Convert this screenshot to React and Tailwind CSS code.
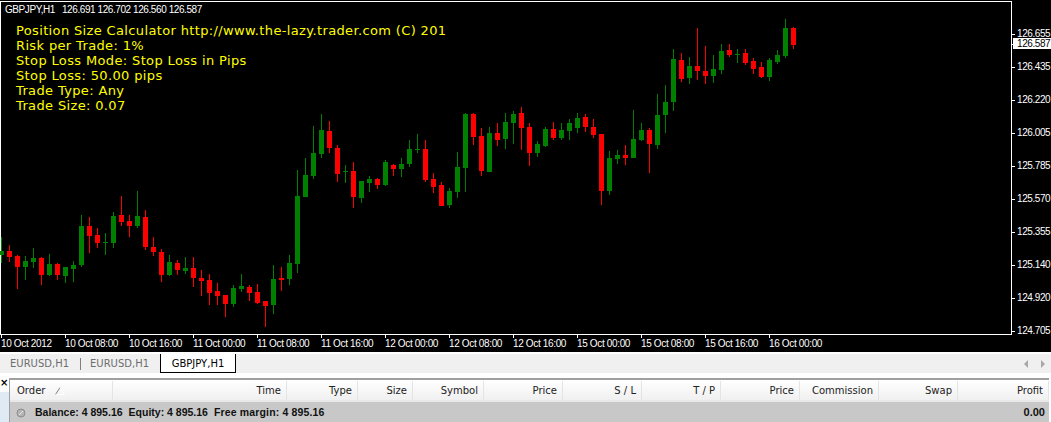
import React from "react";

const ui = "font-['DejaVu_Sans',sans-serif]";
const narrow = "font-['Liberation_Sans',sans-serif]";

// x, up, wickTop, wickBottom, bodyTop, bodyBottom
const z2 = [
  [4, 1, 292, 368, 333, 345], [28, 0, 315, 365, 333, 351], [52, 0, 345, 447, 348, 381], [76, 1, 348, 420, 363, 381],
  [100, 1, 324, 384, 354, 366], [124, 0, 351, 435, 354, 405], [148, 1, 342, 408, 372, 405], [172, 0, 369, 420, 372, 405],
  [196, 1, 381, 429, 381, 408], [220, 1, 363, 426, 375, 387], [244, 1, 225, 381, 258, 375], [268, 0, 231, 339, 258, 288],
  [292, 0, 264, 324, 285, 309], [316, 1, 279, 345, 306, 309], [340, 1, 216, 324, 228, 309], [364, 0, 168, 258, 225, 246],
  [388, 0, 225, 291, 243, 258], [412, 1, 153, 264, 228, 258], [436, 0, 210, 330, 231, 321], [460, 0, 291, 348, 321, 336],
  [484, 0, 327, 426, 336, 405], [508, 1, 345, 408, 366, 405], [532, 0, 360, 405, 369, 390], [556, 1, 351, 402, 384, 393],
  [580, 0, 351, 441, 384, 414], [604, 0, 390, 468, 414, 423], [628, 0, 402, 495, 420, 459], [652, 0, 429, 495, 453, 468],
  [676, 0, 465, 531, 465, 492], [700, 1, 435, 501, 444, 492], [724, 1, 402, 456, 438, 447], [748, 0, 435, 483, 441, 459],
  [772, 0, 432, 492, 456, 489], [796, 0, 483, 561, 483, 498], [820, 1, 375, 522, 417, 495], [844, 0, 381, 453, 414, 420],
  [868, 1, 345, 435, 369, 417], [892, 1, 90, 399, 168, 372], [916, 1, 54, 171, 105, 171], [940, 1, -42, 117, 39, 108],
  [964, 1, -78, 54, -30, 42], [988, 0, -57, 39, -27, 24], [1012, 0, 15, 126, 24, 102], [1036, 1, 75, 129, 93, 96],
];
const z3 = [
  [10, 0, 216, 354, 243, 321], [34, 1, 273, 339, 273, 324], [58, 1, 258, 306, 267, 279], [82, 0, 264, 297, 267, 285],
  [106, 1, 210, 288, 216, 285], [130, 0, 222, 258, 225, 237], [154, 1, 204, 261, 222, 237], [178, 1, 150, 231, 177, 222],
  [202, 1, 132, 189, 177, 180], [226, 0, 150, 276, 177, 270], [250, 0, 249, 309, 267, 291], [274, 0, 276, 348, 285, 348],
  [298, 1, 294, 354, 303, 345], [322, 1, 186, 324, 231, 306], [346, 1, 69, 306, 72, 234], [370, 0, 69, 165, 72, 141],
  [394, 0, 114, 258, 138, 243], [418, 1, 111, 246, 129, 246], [442, 0, 99, 168, 129, 150], [466, 1, 69, 177, 96, 147],
  [490, 1, 63, 162, 72, 99], [514, 0, 51, 180, 69, 114], [538, 0, 99, 228, 111, 189], [562, 1, 153, 201, 162, 189],
  [586, 1, 111, 171, 117, 168], [610, 0, 96, 150, 117, 144], [634, 1, 99, 150, 120, 144], [658, 1, 87, 150, 99, 123],
  [682, 1, 69, 129, 84, 114], [706, 0, 72, 126, 81, 111], [730, 0, 87, 144, 111, 135], [754, 0, 132, 345, 132, 303],
  [778, 1, 183, 315, 204, 303], [802, 1, 180, 222, 195, 207], [826, 0, 165, 225, 195, 204], [850, 1, 60, 204, 147, 204],
  [874, 1, 99, 153, 120, 150], [898, 0, 114, 249, 120, 162],
];
const z4 = [
  [51, 1, 252, 417, 315, 405], [75, 1, 225, 369, 276, 315], [99, 1, 117, 303, 147, 276], [123, 0, 129, 216, 150, 207],
  [147, 1, 141, 222, 168, 204], [171, 0, 54, 210, 168, 183], [195, 0, 108, 222, 183, 198], [219, 1, 135, 219, 177, 198],
  [243, 1, 102, 192, 123, 180], [267, 0, 102, 141, 120, 135], [291, 1, 117, 159, 132, 135], [315, 0, 117, 165, 129, 159],
  [339, 0, 144, 192, 153, 177], [363, 0, 156, 204, 171, 201], [387, 1, 144, 213, 150, 201], [411, 1, 120, 162, 135, 156],
  [435, 1, 27, 144, 54, 138], [459, 0, 51, 117, 54, 105],
];

const toCandle = (ox, oy) => ([x, up, wt, wb, bt, bb]) => ({
  x: Math.round(ox + x / 3),
  up,
  wt: Math.round(oy + wt / 3),
  wb: Math.round(oy + wb / 3),
  bt: Math.round(oy + bt / 3),
  bb: Math.round(oy + bb / 3),
});

const candles = [...z2.map(toCandle(0, 140)), ...z3.map(toCandle(350, 90)), ...z4.map(toCandle(640, 10))];

const prices = [
  ["126.655", 34], ["126.435", 67], ["126.220", 100], ["126.005", 133], ["125.785", 166], ["125.570", 199],
  ["125.355", 232], ["125.140", 265], ["124.920", 298], ["124.705", 331],
];

const times = [
  ["10 Oct 2012", 1], ["10 Oct 08:00", 65], ["10 Oct 16:00", 129], ["11 Oct 00:00", 193], ["11 Oct 08:00", 257],
  ["11 Oct 16:00", 321], ["12 Oct 00:00", 385], ["12 Oct 08:00", 449], ["12 Oct 16:00", 513], ["15 Oct 00:00", 577],
  ["15 Oct 08:00", 641], ["15 Oct 16:00", 705], ["16 Oct 00:00", 769],
];

const infoLines = [
  "Position Size Calculator http://www.the-lazy.trader.com (C) 201",
  "Risk per Trade: 1%",
  "Stop Loss Mode: Stop Loss in Pips",
  "Stop Loss: 50.00 pips",
  "Trade Type: Any",
  "Trade Size: 0.07",
];

const columns = [
  { label: "Time", w: "w-[174px]" },
  { label: "Type", w: "w-[71px]" },
  { label: "Size", w: "w-[55px]" },
  { label: "Symbol", w: "w-[71px]" },
  { label: "Price", w: "w-[79px]" },
  { label: "S / L", w: "w-[79px]" },
  { label: "T / P", w: "w-[79px]" },
  { label: "Price", w: "w-[79px]" },
  { label: "Commission", w: "w-[79px]" },
  { label: "Swap", w: "w-[79px]" },
  { label: "Profit", w: "flex-1" },
];

function Chart() {
  return (
    <svg width="1051" height="352" className="block" shapeRendering="crispEdges">
      <rect x="0" y="1" width="1012" height="1" fill="#fff" />
      <rect x="0" y="1" width="1" height="334" fill="#fff" />
      <rect x="1011" y="1" width="1" height="334" fill="#fff" />
      <rect x="0" y="334" width="1012" height="1" fill="#fff" />
      {candles.map((c) => (
        <g key={c.x} fill={c.up ? "#008000" : "#ff0000"}>
          <rect x={c.x} y={c.wt} width="1" height={c.wb - c.wt} />
          <rect x={c.x - 2} y={c.bt} width="5" height={Math.max(c.bb - c.bt, 1)} />
        </g>
      ))}
      {prices.map(([p, y]) => (
        <g key={p}>
          <rect x="1012" y={y} width="3" height="1" fill="#fff" />
          <text x="1017" y={y + 3} fill="#fff" fontSize="10" fontFamily="Liberation Sans" letterSpacing="-0.42">
            {p}
          </text>
        </g>
      ))}
      <rect x="1012" y="44" width="3" height="1" fill="#fff" />
      <rect x="1013" y="38" width="38" height="11" fill="#fff" />
      <text x="1017" y="47" fill="#000" fontSize="10" fontFamily="Liberation Sans" letterSpacing="-0.42">126.587</text>
      {times.map(([t, x]) => (
        <g key={t}>
          <rect x={x} y="335" width="1" height="3" fill="#fff" />
          <text x={x} y="347" fill="#fff" fontSize="10" fontFamily="Liberation Sans" letterSpacing="-0.35">
            {t}
          </text>
        </g>
      ))}
    </svg>
  );
}

export default function App() {
  return (
    <div className={`h-[422px] w-[1051px] overflow-hidden bg-white ${ui}`}>
      <div className="relative h-[352px] bg-black">
        <Chart />
        <div className={`absolute left-[5px] top-[4px] flex gap-[7px] text-[10px] leading-[12px] tracking-[-0.42px] text-white ${narrow}`}>
          <span>GBPJPY,H1</span>
          <span>126.691 126.702 126.560 126.587</span>
        </div>
        <div className="absolute left-[16px] top-[23px] flex flex-col text-[13px] leading-[15px] tracking-[0.36px] text-[#ffff00]">
          {infoLines.map((line) => (
            <div key={line}>{line}</div>
          ))}
        </div>
      </div>

      <div className="h-[2px] bg-white" />
      <div className="flex h-[19px] items-start bg-[#f0f0f0] text-[10px] text-[#6d6d6d]">
        <div className="flex h-[19px] items-center pl-[10px]">
          <span className="w-[70px]">EURUSD,H1</span>
          <span className="h-[12px] w-px bg-[#808080]" />
          <span className="w-[70px] pl-[9px]">EURUSD,H1</span>
        </div>
        <div className="ml-[9px] flex h-[19px] w-[76px] items-center justify-center border-x border-b border-black bg-white text-black">
          GBPJPY,H1
        </div>
        <div className="ml-auto flex h-[19px] items-center gap-[13px] pr-[6px]">
          <span className="h-0 w-0 border-y-[4px] border-r-[4px] border-y-transparent border-r-[#a8a8a8]" />
          <span className="h-0 w-0 border-y-[4px] border-l-[4px] border-y-transparent border-l-[#a8a8a8]" />
        </div>
      </div>
      <div className="h-[5px] bg-white" />

      <div className="flex h-[44px] bg-white">
        <div className="flex w-[9px] flex-col">
          <div className="h-[14px] text-[10px] leading-[10px] font-bold text-black">×</div>
          <div className="flex-1 bg-[#dfeaf5]" />
        </div>
        <div className="mr-[2px] flex flex-1 flex-col border-l border-[#a0a0a0]">
          <div className="flex h-[24px] border-t-2 border-b-2 border-t-[#a0a0a0] border-b-[#e8e8e8] bg-gradient-to-b from-white to-[#f0f0f0] pt-px text-[10px] text-[#222]">
            <div className="flex w-[103px] items-center border-r border-[#e4e4e4] pl-[7px]">
              <span>Order</span>
              <svg width="10" height="8" viewBox="0 0 10 8" className="ml-[10px]">
                <path d="M0.5 7.5 L5 0.5" stroke="#808080" fill="none" />
                <path d="M5 0.5 L9.5 7.5 L0.5 7.5" stroke="#fff" fill="none" />
              </svg>
            </div>
            {columns.map((c) => (
              <div key={c.label + c.w + c.label.length} className={`flex ${c.w} items-center justify-end border-r border-[#e4e4e4] pr-[5px]`}>
                {c.label}
              </div>
            ))}
          </div>
          <div className={`flex h-[20px] items-center gap-[6px] bg-[#c8c8c8] pt-px text-[10.5px] font-bold text-[#111] ${narrow}`}>
            <svg width="10" height="10" viewBox="0 0 10 10" className="mr-[3px] ml-[6px]">
              <circle cx="5" cy="5" r="4" fill="#b4b4b4" stroke="#8c8c8c" />
              <path d="M3 7 L7 3" stroke="#e4e4e4" />
            </svg>
            <span>Balance: 4 895.16</span>
            <span>Equity: 4 895.16</span>
            <span className="tracking-[0.15px]">Free margin: 4 895.16</span>
            <span className="ml-auto pr-[4px] text-[11px]">0.00</span>
          </div>
        </div>
      </div>
    </div>
  );
}
